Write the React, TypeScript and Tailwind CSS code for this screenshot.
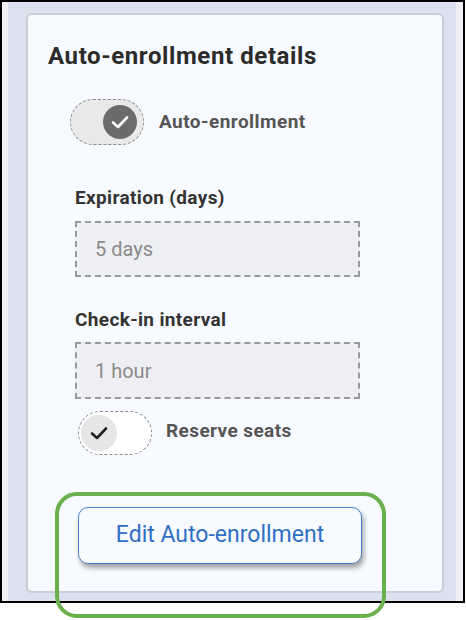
import React from "react";

function Check({ color, size }: { color: string; size: number }) {
  return (
    <svg width={size} height={size} viewBox="0 0 24 24" fill="none">
      <polyline
        points="5,12.5 10,17 19,7.5"
        stroke={color}
        strokeWidth="2.6"
        strokeLinecap="round"
        strokeLinejoin="round"
      />
    </svg>
  );
}

export default function App() {
  return (
    <div
      className="relative w-[466px] h-[620px] bg-white"
      style={{ fontFamily: "Roboto, 'Liberation Sans', sans-serif" }}
    >
      <div className="w-[465px] h-[603px] border-2 border-black">
        <div className="h-full border-l-[6px] border-r-[7px] border-[#f2f0f6] bg-[#dbe1ee] pl-[18px] pr-[12px] pt-[11px] pb-[8px]">
          <div className="h-full rounded-[6px] border-2 border-[#c9cdd5] bg-[#f7faff] pt-[27px] flex flex-col">
            <h1 className="ml-[20px] text-[24px] leading-[28px] tracking-[0.6px] font-bold text-[#2b2b2b]">
              Auto-enrollment details
            </h1>

            <div className="ml-[42px] mt-[29px] flex items-center gap-[15px]">
              <div className="w-[74px] h-[46px] rounded-full border-[1.5px] border-dashed border-[#8a8a8a] bg-[#e9e9ea] flex items-center justify-end pr-[6px]">
                <div className="w-[34px] h-[34px] rounded-full bg-[#6b6b6b] flex items-center justify-center">
                  <Check color="#ffffff" size={24} />
                </div>
              </div>
              <span className="text-[19px] tracking-[0.45px] font-bold text-[#555555]">Auto-enrollment</span>
            </div>

            <label className="ml-[47px] mt-[41px] text-[19px] leading-[24px] tracking-[0.35px] font-bold text-[#333333]">
              Expiration (days)
            </label>
            <div className="ml-[47px] mt-[11px] w-[285px] h-[56px] border-2 border-dashed border-[#9a9a9a] bg-[#eeeff3] flex items-center pl-[18px] text-[20px] text-[#8a8a8a]">
              5 days
            </div>

            <label className="ml-[47px] mt-[31px] text-[19px] leading-[24px] tracking-[0.35px] font-bold text-[#333333]">
              Check-in interval
            </label>
            <div className="ml-[47px] mt-[10px] w-[285px] h-[57px] border-2 border-dashed border-[#9a9a9a] bg-[#eeeff3] flex items-center pl-[18px] text-[20px] text-[#8a8a8a]">
              1 hour
            </div>

            <div className="ml-[50px] mt-[12px] flex items-center gap-[14px]">
              <div className="w-[74px] h-[44px] rounded-full border-[1.5px] border-dashed border-[#8a8a8a] bg-white flex items-center pl-[2px]">
                <div className="w-[36px] h-[36px] rounded-full bg-[#e6e6e8] flex items-center justify-center">
                  <Check color="#222222" size={24} />
                </div>
              </div>
              <span className="text-[19px] tracking-[0.4px] font-bold text-[#555555] -mt-[3px]">Reserve seats</span>
            </div>

            <button className="ml-[50px] mt-[52px] w-[284px] h-[57px] rounded-[10px] border-[1.5px] border-[#4a7fc4] bg-[#f7faff] shadow-[2px_4px_5px_rgba(0,0,0,0.35)] text-[23px] text-[#2f6fc4]">
              Edit Auto-enrollment
            </button>
          </div>
        </div>
      </div>

      <div className="absolute left-[55px] top-[492px] w-[331px] h-[126px] rounded-[22px] border-[4.5px] border-[#6ab04c]" />
    </div>
  );
}
